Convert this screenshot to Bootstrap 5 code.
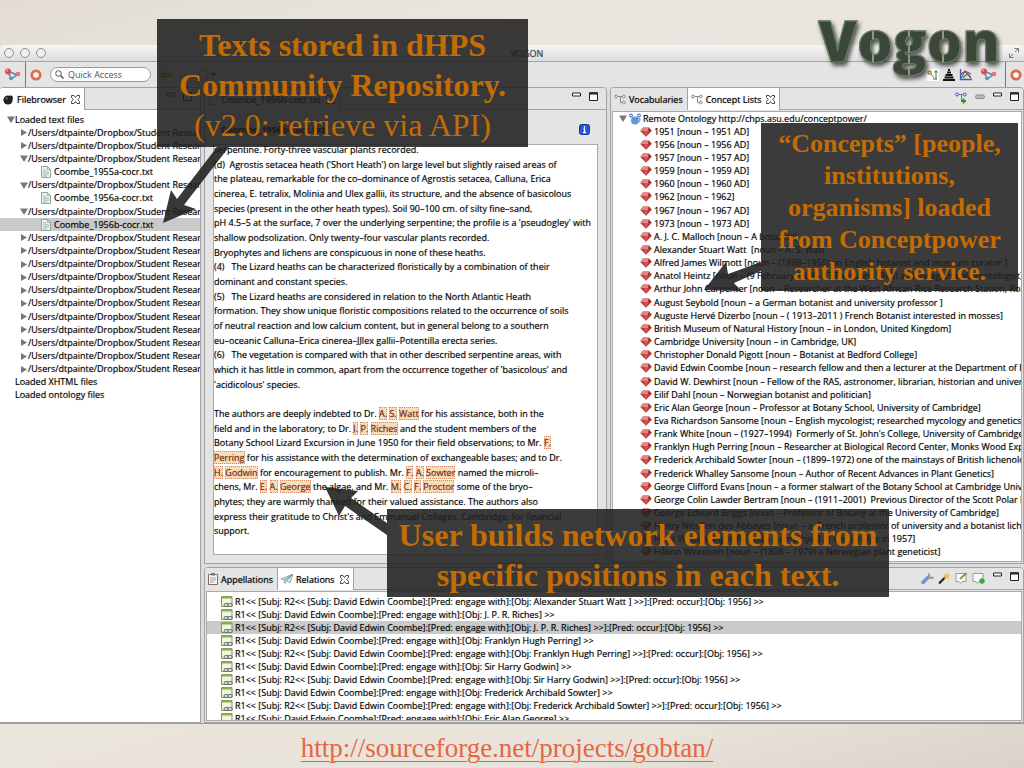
<!DOCTYPE html>
<html lang="en">
<head>
<meta charset="utf-8">
<meta name="viewport" content="width=device-width, initial-scale=1">
<title>Vogon</title>
<link rel="stylesheet" href="https://cdn.jsdelivr.net/npm/bootstrap@5.3.0/dist/css/bootstrap.min.css">
<style>
  .slide { font: 9px/13px "Open Sans", sans-serif; color: #000; overflow: hidden;
    background: linear-gradient(165deg, #e2dcd3 0, #e9e4dc 12%, #ece7e0 50%, #e8e2da 88%, #d9d2c8 100%); }
  .slide-head { flex: 0 0 45px; }
  .slide-foot { flex: 0 0 44px; padding: 4px 10px 0 0; }
  .slide-foot a { font: 27px/40px "Liberation Serif", serif; color: #e5673f; text-decoration-thickness: 1px; text-underline-offset: 4px; }
  .app-window { background: #dcdcdc; min-height: 0; border-bottom: 1px solid #999; border-radius: 4px 4px 0 0; text-shadow: 0 0 1px rgba(0, 0, 0, .45); }
  .title-strip { height: 17px; background: linear-gradient(#f6f6f6, #dedede); border-bottom: 1px solid #a4a4a4; border-radius: 4px 4px 0 0; color: #444; }
  .lights { gap: 6px; }
  .light { width: 10px; height: 10px; border: 1px solid #8f8f8f; border-radius: 50%; background: #efefef; }
  .tool-strip { height: 25px; background: #e4e4e4; }
  .tool-strip .vr { background: #777; opacity: 1; }
  .tool-end { padding-right: 2px; }
  .quick { width: 101px; height: 15px; border: 1px solid #999; border-radius: 8px; background: #fff; }
  .quick input { font: 9px/11px "Open Sans", sans-serif; width: 70px; border: 0; padding: 0; outline: 0; background: none; }
  .quick input::placeholder { color: #555; opacity: 1; }
  .panes { display: grid; grid-template-columns: 201fr 820fr; gap: 3px; min-height: 0; }
  .side { display: grid; grid-template-rows: minmax(0, 1fr) 156px; gap: 3px; min-height: 0; min-width: 0; }
  .upper { display: grid; grid-template-columns: minmax(0, 403fr) minmax(0, 414fr); gap: 3px; min-height: 0; }
  .pane { border: 1px solid #a2a2a2; border-radius: 4px 4px 0 0; background: #e4e4e4; min-height: 0; min-width: 0; overflow: hidden; }
  .pane-head { height: 22px; border-bottom: 1px solid #a2a2a2; background: #e4e4e4; }
  .pane-tab { border: 0; border-right: 1px solid #a2a2a2; background: #e4e4e4; padding: 0 4px 0 3px; margin-bottom: -1px; white-space: nowrap; font: 9px/13px "Open Sans", sans-serif; color: #000; gap: 3px; text-shadow: 0 0 1px rgba(0, 0, 0, .6); }
  .pane-tab.on { background: #fff; }
  .close-x { margin-left: 2px; }
  .btn-ico { border: 0; background: none; padding: 0; line-height: 0; }
  .btn-ico:focus-visible, .pane-tab:focus-visible { outline: 1px solid #36c; }
  .doc-bar { height: 34px; }
  ul.rows { list-style: none; margin: 0; padding: 0; display: grid; white-space: nowrap; }
  ul.rows li { display: flex; align-items: center; min-height: 0; overflow: hidden; line-height: 12px; }
  ul.tree { height: 289px; grid-template-rows: repeat(22, 1fr); margin-top: 3px; }
  .well { background: #fff; border: 1px solid #aaa; overflow: hidden; min-height: 0; }
  .well-flush { margin: 1px; }
  .picked { background: #cacaca; }
  .lv0 { padding-left: 7px; } .lv1 { padding-left: 20px; } .lv2 { padding-left: 41px; gap: 3px; }
  .leaf0 { padding-left: 15px; }
  ul.concepts { height: 100%; grid-template-rows: repeat(34, minmax(0, 1fr)); grid-auto-rows: 0; padding-bottom: 2px; }
  .concepts li { padding-left: 27px; gap: 2px; }
  .concepts li:first-child { padding-left: 6px; }
  .concepts li:last-child, .rels li:last-child { height: 12px; }
  .keep { white-space: pre; }
  ul.rels { height: 100%; grid-template-rows: repeat(9, minmax(0, 1fr)); grid-auto-rows: 0; padding: 3px 0 7px; }
  .rels li { padding-left: 14px; gap: 2px; }
  .doc { height: 100%; display: grid; grid-template-rows: repeat(27, minmax(0, 1fr)); margin-top: -2px; padding-bottom: 13px; white-space: pre; line-height: 14px; }
  .doc b { font-weight: 400; color: #7b2c16; background: #fbdcb8; outline: 1px dotted #d08a6a; outline-offset: -1px; }
  .callout { position: absolute; background: rgba(32, 32, 32, .88); color: #c46c04; text-align: center; font: 700 32px/40px "Liberation Serif", serif; white-space: nowrap; z-index: 3; }
  .c-texts { left: 157px; top: 19px; width: 371px; padding: 6px 0 2px; }
  .c-concepts { left: 761px; top: 123px; width: 257px; padding: 5px 0 3px; font-size: 26px; line-height: 32px; }
  .c-network { left: 387px; top: 509px; width: 502px; padding: 6px 0 2px; }
  .arrows { position: absolute; left: 0; top: 0; z-index: 2; pointer-events: none; }
  .logo-word { position: absolute; right: 24px; top: 5px; z-index: 4; font: 800 56px/70px "Open Sans", sans-serif; color: transparent;
    -webkit-text-stroke: 1px #6f8560; background: linear-gradient(90deg, #3c473c 54px, #8f9c83 54px 56px, #3c473c 56px 90px, #8f9c83 90px 92px, #3c473c 92px 124px, #8f9c83 124px 126px, #3c473c 126px);
    -webkit-background-clip: text; background-clip: text; filter: drop-shadow(2px 3px 2px rgba(0, 0, 0, .65)); }
</style>
<script src="https://cdn.jsdelivr.net/npm/bootstrap@5.3.0/dist/js/bootstrap.bundle.min.js"></script>
</head>
<body>
<svg width="0" height="0" class="position-absolute" aria-hidden="true">
  <defs>
    <symbol id="closed" viewBox="0 0 8 9"><path d="M1 1l6 3.500-6 3.500z" fill="#777"/></symbol>
    <symbol id="open" viewBox="0 0 8 9"><path d="M0 1.500h8L4 8z" fill="#777"/></symbol>
    <symbol id="page" viewBox="0 0 10 12"><path d="M.5.5h6l3 3v8h-9z" fill="#eef4ee" stroke="#8fa5a5"/><path d="M6.500.5v3h3M2 4h3M2 6h6M2 8h6M2 10h4" fill="none" stroke="#9db3a5"/></symbol>
    <symbol id="gem" viewBox="0 0 12 10"><path d="M3 .5h6L11.700 4 6 9.800.3 4z" fill="#c03a3c"/><path d="M3 .5h6L8 4H4zM.3 4L3 .5 4 4z" fill="#dd8883"/><path d="M4 4h4L6 9.800z" fill="#cf5855"/><path d="M9 .5L11.700 4H8z" fill="#a82b2f"/></symbol>
    <symbol id="cross" viewBox="0 0 9 9"><path d="M.5.5h2.500l1.500 2 1.500-2h2.500v2L6.800 4.500l1.700 2v2H6l-1.500-2-1.500 2H.5v-2l1.700-2L.5 2.500z" fill="#fff" stroke="#333" stroke-width=".9"/></symbol>
    <symbol id="min" viewBox="0 0 9 9"><path d="M.5 1h8v3h-8z" fill="#fff" stroke="#222"/></symbol>
    <symbol id="max" viewBox="0 0 9 9"><path d="M.5.8h8v7.700h-8z" fill="#fff" stroke="#222"/><path d="M0 1.500h9" stroke="#222" stroke-width="2"/></symbol>
    <symbol id="net" viewBox="0 0 17 14"><path d="M4 3l9 4-6 4z" fill="none" stroke="#4b8fa6" stroke-width="1.500"/><circle cx="4" cy="3.500" r="3" fill="#dd4a4a"/><circle cx="14" cy="6" r="2.300" fill="#e27070"/><circle cx="7" cy="10.500" r="1.800" fill="#5a93a5"/><circle cx="3.200" cy="2.600" r="1" fill="#f6b0aa"/></symbol>
    <symbol id="ring" viewBox="0 0 12 12"><circle cx="6" cy="6" r="4.200" fill="#fff" stroke="#e2694b" stroke-width="2.800"/></symbol>
    <symbol id="nodes" viewBox="0 0 12 11"><path d="M4 2.500h5M6.500 2.500v6h3" fill="none" stroke="#888"/><g fill="#eee" stroke="#888"><circle cx="2" cy="2.500" r="1.400"/><circle cx="9.800" cy="2.500" r="1.400"/><circle cx="9.800" cy="8.500" r="1.400"/></g></symbol>
    <symbol id="rel" viewBox="0 0 12 12"><path d="M.5.5h10.500v10h-10.500z" fill="#eef5dc" stroke="#7c9a4c"/><path d="M1 1.500h10" stroke="#8cad55" stroke-width="2"/><rect x="3" y="7.500" width="4.500" height="3" rx="1.500" fill="#ddd" stroke="#666"/><rect x="6.800" y="7.500" width="4.500" height="3" rx="1.500" fill="#ddd" stroke="#666"/></symbol>
  </defs>
</svg>

<main class="slide position-relative vh-100 d-flex flex-column">
  <header class="slide-head"></header>
  <div class="logo-word">Vogon</div>

  <section class="app-window flex-grow-1 d-flex flex-column">
    <div class="title-strip d-flex align-items-center justify-content-between px-1">
      <div class="lights d-flex"><span class="light"></span><span class="light"></span><span class="light"></span></div>
      <span>VOGON</span>
      <svg width="12" height="12" viewBox="0 0 12 12" fill="none" stroke="#777"><path d="M6.500 1.500h4v4M10 2L7 5M1.500 6.500v4h4M2 10l3-3"/></svg>
    </div>
    <div class="tool-strip d-flex align-items-center">
      <button class="btn-ico ms-1" aria-label="Network"><svg width="17" height="14"><use href="#net"/></svg></button>
      <span class="vr ms-1"></span>
      <button class="btn-ico ms-1" aria-label="Perspective"><svg width="12" height="12"><use href="#ring"/></svg></button>
      <label class="quick d-flex align-items-center ms-2 ps-1 gap-1"><svg width="9" height="9" viewBox="0 0 9 9" fill="none" stroke="#555"><circle cx="3.500" cy="3.500" r="2.800"/><path d="M5.500 5.500l3 3" stroke-width="1.500"/></svg><input type="text" placeholder="Quick Access" aria-label="Quick Access"></label>
      <button class="btn-ico ms-2" aria-label="Back"><svg width="12" height="10" viewBox="0 0 12 10"><path d="M.5 5L5 1v2.500h6.500v3H5V9z" fill="#f0b93a" stroke="#8a6414"/></svg></button>
      <svg class="ms-1" width="42" height="12" viewBox="0 0 42 12"><path d="M6 2v8M10 4v6M24.500 1.500h8v9h-8z" fill="none" stroke="#aaa"/><path d="M36 4h5l-2.500 3z" fill="#222"/></svg>
      <div class="tool-end d-flex align-items-center ms-auto gap-1 h-100">
        <svg width="12" height="12" viewBox="0 0 12 12"><path fill="#fff" d="M0 0h12v12H0z"/><path d="M1 2h3v3H1zM4 5l3 4" fill="#f1d9a0" stroke="#8a7440"/><path d="M9 10V2M7.500 3.500L9 1.500l1.500 2M6 10h4" fill="none" stroke="#396b45"/></svg>
        <svg width="12" height="12" viewBox="0 0 12 12"><path d="M5 1h2M4 3.500h4M2.500 6h7M1.500 8.500h9M0 11h12" stroke="#111" stroke-width="1.800"/></svg>
        <svg width="13" height="12" viewBox="0 0 13 12" fill="none" stroke-width="1.300"><path d="M1.500 0v10.500H13" stroke="#3b5ea8"/><path d="M2 9l4-7 6 3" stroke="#3a62c4"/><path d="M2 5q5-5 10 4" stroke="#d33"/><path d="M4 9l4-4 4 4" stroke="#398f49"/></svg>
        <button class="btn-ico ms-1" aria-label="Network view"><svg width="17" height="14"><use href="#net"/></svg></button>
        <span class="vr ms-1 h-100 align-self-stretch"></span>
        <button class="btn-ico" aria-label="Open perspective"><svg width="12" height="12"><use href="#ring"/></svg></button>
      </div>
    </div>

    <div class="panes flex-grow-1">
      <section class="pane d-flex flex-column bg-white border-start-0">
        <div class="pane-head d-flex flex-shrink-0">
          <button class="pane-tab on d-flex align-items-center"><svg width="11" height="11" viewBox="0 0 11 11"><circle cx="5" cy="6" r="4.600" fill="#222"/><path d="M5 5l3-4 2 2-1 4z" fill="#222"/><circle cx="3.600" cy="4.600" r="1" fill="#888"/></svg>Filebrowser<svg class="close-x" width="9" height="9"><use href="#cross"/></svg></button>
          <span class="d-flex align-items-start ms-auto gap-2 pt-1 pe-2"><button class="btn-ico" aria-label="Minimize"><svg width="9" height="9"><use href="#min"/></svg></button><button class="btn-ico" aria-label="Maximize"><svg width="9" height="9"><use href="#max"/></svg></button></span>
        </div>
        <ul class="rows tree" id="tree"></ul>
      </section>

      <div class="side">
        <div class="upper">
          <section class="pane d-flex flex-column">
            <div class="pane-head d-flex flex-shrink-0">
              <button class="pane-tab d-flex align-items-center"><svg width="10" height="11"><use href="#page"/></svg>Coombe_1956b-cocr.txt<svg class="close-x" width="9" height="9"><use href="#cross"/></svg></button>
              <span class="d-flex align-items-start ms-auto gap-2 pt-1 pe-2"><button class="btn-ico" aria-label="Minimize"><svg width="9" height="9"><use href="#min"/></svg></button><button class="btn-ico" aria-label="Maximize"><svg width="9" height="9"><use href="#max"/></svg></button></span>
            </div>
            <div class="doc-bar d-flex align-items-center justify-content-between flex-shrink-0 ps-3 pe-3 pt-1">
              <strong>Coombe_1956b-cocr.txt</strong>
              <svg width="11" height="11" viewBox="0 0 11 11"><rect x=".5" y=".5" width="10" height="10" rx="2" fill="#2458d8" stroke="#173a98"/><path d="M5.500 2v1.800M4.500 5h1v3M4 8.500h3" stroke="#fff" stroke-width="1.300"/></svg>
            </div>
            <div class="well flex-grow-1 ms-2 me-2 mb-2"><div class="doc" id="doc"></div></div>
          </section>

          <section class="pane d-flex flex-column">
            <div class="pane-head d-flex flex-shrink-0">
              <button class="pane-tab d-flex align-items-center"><svg width="12" height="11"><use href="#nodes"/></svg>Vocabularies</button>
              <button class="pane-tab on d-flex align-items-center"><svg width="12" height="11"><use href="#nodes"/></svg>Concept Lists<svg class="close-x" width="9" height="9"><use href="#cross"/></svg></button>
              <span class="d-flex align-items-start ms-auto gap-2 pt-1 pe-1">
                <button class="btn-ico" aria-label="Add concept"><svg width="12" height="12" viewBox="0 0 12 12"><path d="M3 2.500h6M6.500 2.500v6" stroke="#777"/><g fill="#dfe6ff" stroke="#3b5ed0"><circle cx="2" cy="2.500" r="1.500"/><circle cx="9.800" cy="2.500" r="1.500"/></g><path d="M6 9h5M8.500 6.500v5" stroke="#2b9a2b" stroke-width="2"/></svg></button>
                <button class="btn-ico" aria-label="Link"><svg width="10" height="9" viewBox="0 0 10 9"><rect x=".5" y="3" width="9" height="3.500" rx="1.700" fill="#bbb" stroke="#888"/></svg></button>
                <button class="btn-ico" aria-label="Minimize"><svg width="9" height="9"><use href="#min"/></svg></button><button class="btn-ico" aria-label="Maximize"><svg width="9" height="9"><use href="#max"/></svg></button></span>
            </div>
            <div class="well well-flush flex-grow-1"><ul class="rows concepts" id="concepts"></ul></div>
          </section>
        </div>

        <section class="pane d-flex flex-column">
          <div class="pane-head d-flex flex-shrink-0">
            <button class="pane-tab d-flex align-items-center"><svg width="10" height="12" viewBox="0 0 10 12"><path d="M.5 1.500h9v10h-9z" fill="#f6f6f6" stroke="#8b6b55"/><path d="M3 0h4v2.500H3z" fill="#777"/><path d="M2 5h6M2 7h6M2 9h4" stroke="#9ab"/></svg>Appellations</button>
            <button class="pane-tab on d-flex align-items-center"><svg width="12" height="10" viewBox="0 0 12 10"><path d="M0 5L12 0 9 9 5.500 6.500 4 9.500 3.500 6z" fill="#dbe6e6" stroke="#8aa"/><path d="M3.500 6L12 0 5.500 6.500" fill="none" stroke="#799"/></svg>Relations<svg class="close-x" width="9" height="9"><use href="#cross"/></svg></button>
            <span class="d-flex align-items-start ms-auto gap-1 pt-1 pe-1">
              <button class="btn-ico" aria-label="Settings"><svg width="13" height="12" viewBox="0 0 13 12"><path d="M2 10.500L7 5.500" stroke="#6c93dc" stroke-width="3.500" stroke-linecap="round"/><path d="M7 6l2-2M8 1.500v3l2 1.500 2.500-.5" fill="none" stroke="#999" stroke-width="2"/></svg></button>
              <button class="btn-ico" aria-label="Wand"><svg width="13" height="12" viewBox="0 0 13 12"><path d="M1 11.500L7.500 5" stroke="#222" stroke-width="2.200"/><path d="M9 0l1 2.500 2.500.5-2 1.800.5 2.700-2.500-1.500L6.500 7V4.500L5 2.500l3 .3z" fill="#f6c53a"/></svg></button>
              <button class="btn-ico" aria-label="Edit"><svg width="13" height="12" viewBox="0 0 13 12"><path d="M1 1.500h10v8H7l-1.500 2-1.500-2H1z" fill="#fafafa" stroke="#999"/><path d="M5 7l6.500-6" stroke="#a9862f" stroke-width="1.800"/></svg></button>
              <button class="btn-ico" aria-label="Add"><svg width="13" height="12" viewBox="0 0 13 12"><path d="M1 1.500h10v8H7l-1.500 2-1.500-2H1z" fill="#fafafa" stroke="#999"/><circle cx="10" cy="9" r="2.700" fill="#42a83a"/></svg></button>
              <button class="btn-ico ms-1" aria-label="Minimize"><svg width="9" height="9"><use href="#min"/></svg></button>
              <button class="btn-ico ms-1" aria-label="Maximize"><svg width="9" height="9"><use href="#max"/></svg></button></span>
          </div>
          <div class="well well-flush flex-grow-1"><ul class="rows rels" id="rels"></ul></div>
        </section>
      </div>
    </div>
  </section>

  <footer class="slide-foot text-center"><a href="http://sourceforge.net/projects/gobtan/">http://sourceforge.net/projects/gobtan/</a></footer>

  <svg class="arrows" width="1024" height="768" fill="#222" fill-opacity=".9" aria-hidden="true">
    <path d="M163 223L171 190 177 199 217 147H229L184 205 196 209z"/>
    <path d="M704 290L726 262 728 274 761 262V271L734 283 741 291z"/>
    <path d="M325 487L358 491 351 498 387 523V535L345 506 339 516z"/>
  </svg>
  <aside class="callout c-texts">Texts stored in dHPS<br>Community Repository.<br><span class="fw-normal">(v2.0: retrieve via API)</span></aside>
  <aside class="callout c-concepts">“Concepts” [people,<br>institutions,<br>organisms] loaded<br>from Conceptpower<br>authority service.</aside>
  <aside class="callout c-network">User builds network elements from<br>specific positions in each text.</aside>
</main>

<script>
const icon = (id, w, h) => `<svg class="flex-shrink-0" width="${w}" height="${h}"><use href="#${id}"/></svg>`;
const esc = s => s.replace(/</g, '&lt;').replace(/>/g, '&gt;');

// file tree: folders, some of them opened on one text
const dir = open => `<li class="lv1">${icon(open ? 'open' : 'closed', 8, 9)}/Users/dtpainte/Dropbox/Student Research</li>`;
const file = (name, on) => `<li class="lv2${on ? ' picked' : ''}">${icon('page', 10, 12)}${name}</li>`;
document.getElementById('tree').innerHTML =
  `<li class="lv0">${icon('open', 8, 9)}Loaded text files</li>` + dir() + dir() +
  dir(1) + file('Coombe_1955a-cocr.txt') + dir(1) + file('Coombe_1956a-cocr.txt') +
  dir(1) + file('Coombe_1956b-cocr.txt', 1) + dir().repeat(11) +
  '<li class="leaf0">Loaded XHTML files</li><li class="leaf0">Loaded ontology files</li>';

// document lines; *word* marks an annotated word
const doc = `serpentine. Forty-three vascular plants recorded.
(d)  Agrostis setacea heath ('Short Heath') on large level but slightly raised areas of
the plateau, remarkable for the co–dominance of Agrostis setacea, Calluna, Erica
cinerea, E. tetralix, Molinia and Ulex gallii, its structure, and the absence of basicolous
species (present in the other heath types). Soil 90–100 cm. of silty fine–sand,
pH 4.5–5 at the surface, 7 over the underlying serpentine; the profile is a 'pseudogley' with
shallow podsolization. Only twenty–four vascular plants recorded.
Bryophytes and lichens are conspicuous in none of these heaths.
(4)   The Lizard heaths can be characterized floristically by a combination of their
dominant and constant species.
(5)   The Lizard heaths are considered in relation to the North Atlantic Heath
formation. They show unique floristic compositions related to the occurrence of soils
of neutral reaction and low calcium content, but in general belong to a southern
eu–oceanic Calluna–Erica cinerea–JJlex gallii–Potentilla erecta series.
(6)   The vegetation is compared with that in other described serpentine areas, with
which it has little in common, apart from the occurrence together of 'basicolous' and
'acidicolous' species.

The authors are deeply indebted to Dr. *A.* *S.* *Watt* for his assistance, both in the
field and in the laboratory; to Dr. *J.* *P.* *Riches* and the student members of the
Botany School Lizard Excursion in June 1950 for their field observations; to Mr. *F.*
*Perring* for his assistance with the determination of exchangeable bases; and to Dr.
*H.* *Godwin* for encouragement to publish. Mr. *F.* *A.* *Sowter* named the microli–
chens, Mr. *E.* *A.* *George* the algae, and Mr. *M.* *C.* *F.* *Proctor* some of the bryo–
phytes; they are warmly thanked for their valued assistance. The authors also
express their gratitude to Christ's and Emmanuel Colleges, Cambridge, for financial
support.`;
document.getElementById('doc').innerHTML = doc.split('\n')
  .map(l => `<div>${l.replace(/\*(.+?)\*/g, '<b>$1</b>')}</div>`).join('');

const concepts = `1951 [noun – 1951 AD]
1956 [noun – 1956 AD]
1957 [noun – 1957 AD]
1959 [noun – 1959 AD]
1960 [noun – 1960 AD]
1962 [noun – 1962]
1967 [noun – 1967 AD]
1973 [noun – 1973 AD]
A. J. C. Malloch [noun – A botanist]
Alexander Stuart Watt  [noun – A. S. Watt
Alfred James Wilmott [noun – (1888–1950) an English botanist and museum curator.]
Anatol Heintz [noun – (9 February 1898–23 February 1975) a Norwegian palaeontologist]
Arthur John Carpenter [noun – Researcher at the West African Rice Research Station, Rokupr]
August Seybold [noun – a German botanist and university professor ]
Auguste Hervé Dizerbo [noun – ( 1913–2011 ) French Botanist interested in mosses]
British Museum of Natural History [noun – in London, United Kingdom]
Cambridge University [noun – in Cambridge, UK]
Christopher Donald Pigott [noun – Botanist at Bedford College]
David Edwin Coombe [noun – research fellow and then a lecturer at the Department of Botany]
David W. Dewhirst [noun – Fellow of the RAS, astronomer, librarian, historian and university]
Eilif Dahl [noun – Norwegian botanist and politician]
Eric Alan George [noun – Professor at Botany School, University of Cambridge]
Eva Richardson Sansome [noun – English mycologist; researched mycology and genetics;
Frank White [noun – (1927–1994)  Formerly of St. John's College, University of Cambridge]
Franklyn Hugh Perring [noun – Researcher at Biological Record Center, Monks Wood Experimental]
Frederick Archibald Sowter [noun – (1899–1972) one of the mainstays of British lichenology]
Frederick Whalley Sansome [noun – Author of Recent Advances in Plant Genetics]
George Clifford Evans [noun – a former stalwart of the Botany School at Cambridge University]
George Colin Lawder Bertram [noun – (1911–2001)  Previous Director of the Scott Polar Research]
George Edward Briggs [noun – Professor of Botany at the University of Cambridge]
Henry Nicollon des Abbayes [noun – a  French professor of university and a botanist lichenologist]
Hans W. Benninghoff [noun – employed at Cambridge in 1957]
Håkon Wexelsen [noun – (1898 – 1979) a Norwegian plant geneticist]
 `.split('\n');
const globe = '<svg width="12" height="12" viewBox="0 0 12 12"><circle cx="6" cy="7.500" r="4" fill="#5a9bd4"/><g fill="#dfe8ff" stroke="#3b62cf"><circle cx="2" cy="2.500" r="1.500"/><circle cx="10" cy="2.500" r="1.500"/><circle cx="9.500" cy="7" r="1.500"/></g></svg>';
document.getElementById('concepts').innerHTML =
  `<li>${icon('open', 8, 9)}${globe}Remote Ontology http://chps.asu.edu/conceptpower/</li>` +
  concepts.map(t => `<li>${icon('gem', 12, 10)}<span class="keep">${t}</span></li>`).join('');

// relations: [object, true when wrapped in an "occur 1956" relation]
const rels = [['Alexander Stuart Watt ', 1], ['J. P. R. Riches', 0], ['J. P. R. Riches', 1], ['Franklyn Hugh Perring', 0],
  ['Franklyn Hugh Perring', 1], ['Sir Harry Godwin', 0], ['Sir Harry Godwin', 1], ['Frederick Archibald Sowter', 0],
  ['Frederick Archibald Sowter', 1], ['Eric Alan George', 0]];
document.getElementById('rels').innerHTML = rels.map(([o, w], i) => {
  const core = `[Subj: David Edwin Coombe]:[Pred: engage with]:[Obj: ${o}] >>`;
  return `<li class="${i === 2 ? 'picked' : ''}">${icon('rel', 12, 12)}` +
    esc(w ? `R1<< [Subj: R2<< ${core}]:[Pred: occur]:[Obj: 1956] >>` : `R1<< ${core}`) + '</li>';
}).join('');
</script>
</body>
</html>
